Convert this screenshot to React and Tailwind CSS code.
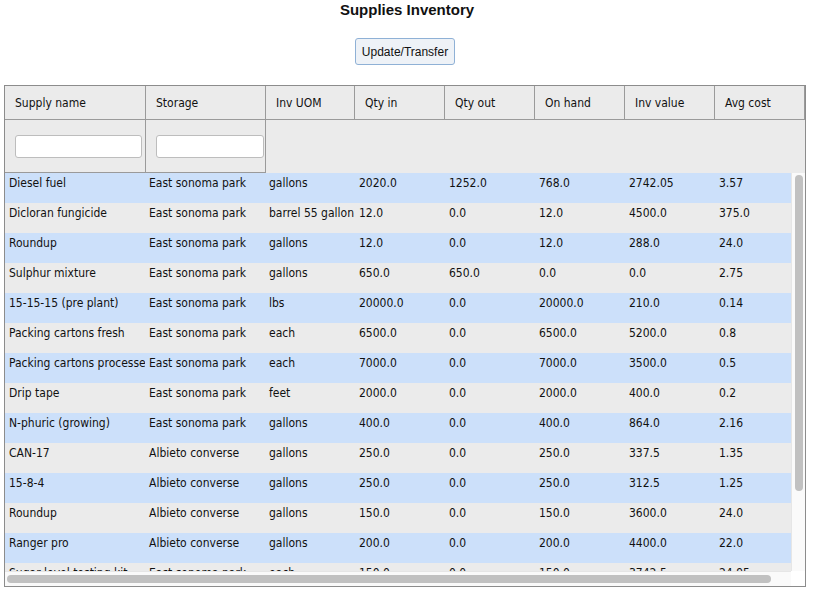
const ROWS = [
  ['Diesel fuel', 'East sonoma park', 'gallons', '2020.0', '1252.0', '768.0', '2742.05', '3.57'],
  ['Dicloran fungicide', 'East sonoma park', 'barrel 55 gallon', '12.0', '0.0', '12.0', '4500.0', '375.0'],
  ['Roundup', 'East sonoma park', 'gallons', '12.0', '0.0', '12.0', '288.0', '24.0'],
  ['Sulphur mixture', 'East sonoma park', 'gallons', '650.0', '650.0', '0.0', '0.0', '2.75'],
  ['15-15-15 (pre plant)', 'East sonoma park', 'lbs', '20000.0', '0.0', '20000.0', '210.0', '0.14'],
  ['Packing cartons fresh', 'East sonoma park', 'each', '6500.0', '0.0', '6500.0', '5200.0', '0.8'],
  ['Packing cartons processed', 'East sonoma park', 'each', '7000.0', '0.0', '7000.0', '3500.0', '0.5'],
  ['Drip tape', 'East sonoma park', 'feet', '2000.0', '0.0', '2000.0', '400.0', '0.2'],
  ['N-phuric (growing)', 'East sonoma park', 'gallons', '400.0', '0.0', '400.0', '864.0', '2.16'],
  ['CAN-17', 'Albieto converse', 'gallons', '250.0', '0.0', '250.0', '337.5', '1.35'],
  ['15-8-4', 'Albieto converse', 'gallons', '250.0', '0.0', '250.0', '312.5', '1.25'],
  ['Roundup', 'Albieto converse', 'gallons', '150.0', '0.0', '150.0', '3600.0', '24.0'],
  ['Ranger pro', 'Albieto converse', 'gallons', '200.0', '0.0', '200.0', '4400.0', '22.0'],
  ['Sugar level testing kit', 'East sonoma park', 'each', '150.0', '0.0', '150.0', '3742.5', '24.95'],
  ['Drip tape', 'Albieto converse', 'feet', '1000.0', '0.0', '1000.0', '200.0', '0.2'],
]

const HEADERS = ['Supply name', 'Storage', 'Inv UOM', 'Qty in', 'Qty out', 'On hand', 'Inv value', 'Avg cost']
const HEAD_W = ['w-[141px]', 'w-[120px]', 'w-[89px]', 'w-[90px]', 'w-[90px]', 'w-[90px]', 'w-[90px]', 'w-[90px]']
const BODY_W = ['w-[140px]', 'w-[120px]', 'w-[90px]', 'w-[90px]', 'w-[90px]', 'w-[90px]', 'w-[90px]', 'w-[77px]']

export default function App() {
  return (
    <div className="min-h-[607px] bg-white font-['DejaVu_Sans_Condensed','DejaVu_Sans',sans-serif] text-[12px] text-[#111]">
      <h1 className="pt-[1px] text-center font-['Liberation_Sans',Arial,sans-serif] text-[15px] font-bold leading-[18px] text-[#111]">
        Supplies Inventory
      </h1>

      <div className="mt-[19px] flex justify-center pr-[4px]">
        <button
          type="button"
          className="h-[27px] w-[100px] rounded-[3px] border border-[#8fb1d6] bg-[#eef2f7] font-['Liberation_Sans',Arial,sans-serif] text-[12px] text-[#111]"
        >
          Update/Transfer
        </button>
      </div>

      <div className="ml-[4px] mt-[20px] flex h-[502px] w-[802px] flex-col border border-[#8c8c8c] bg-[#ebebeb]">
        {/* header */}
        <div className="flex h-[34px] shrink-0">
          {HEADERS.map((h, i) => (
            <div
              key={h}
              className={`${HEAD_W[i]} flex shrink-0 items-center border-b border-r border-[#9a9a9a] pl-[10px] pt-[1px]`}
            >
              {h}
            </div>
          ))}
        </div>

        {/* filters */}
        <div className="flex h-[53px] shrink-0">
          <div className="flex w-[141px] shrink-0 items-center border-b border-r border-[#9a9a9a] pl-[10px]">
            <input className="h-[23px] w-[127px] rounded-[3px] border border-[#bdbdbd] bg-white" />
          </div>
          <div className="flex w-[120px] shrink-0 items-center border-b border-r border-[#9a9a9a] pl-[10px]">
            <input className="h-[23px] w-[108px] rounded-[3px] border border-[#bdbdbd] bg-white" />
          </div>
        </div>

        {/* body */}
        <div className="flex min-h-0 flex-1 bg-white">
          <div className="min-w-0 flex-1 overflow-hidden">
            {ROWS.map((r, ri) => (
              <div
                key={ri}
                className={`flex h-[30px] ${ri % 2 === 0 ? 'bg-[#cce0fa]' : 'bg-[#ebebeb]'}`}
              >
                {r.map((c, ci) => (
                  <div
                    key={ci}
                    className={`${BODY_W[ci]} shrink-0 overflow-hidden whitespace-nowrap pl-[4px] pt-[2px] leading-[16px]`}
                  >
                    {c}
                  </div>
                ))}
              </div>
            ))}
          </div>
          <div className="flex w-[14px] shrink-0 justify-center border-l border-[#e6e6e6] bg-[#fafafa] pt-[2px]">
            <div className="h-[316px] w-[8px] rounded-full bg-[#c1c1c1]" />
          </div>
        </div>

        {/* horizontal scrollbar */}
        <div className="flex h-[15px] shrink-0 bg-white">
          <div className="flex flex-1 items-center border-t border-[#e6e6e6] bg-[#fafafa] pl-[2px]">
            <div className="h-[8px] w-[764px] rounded-full bg-[#c1c1c1]" />
          </div>
          <div className="w-[14px] shrink-0 bg-white" />
        </div>
      </div>
    </div>
  )
}
